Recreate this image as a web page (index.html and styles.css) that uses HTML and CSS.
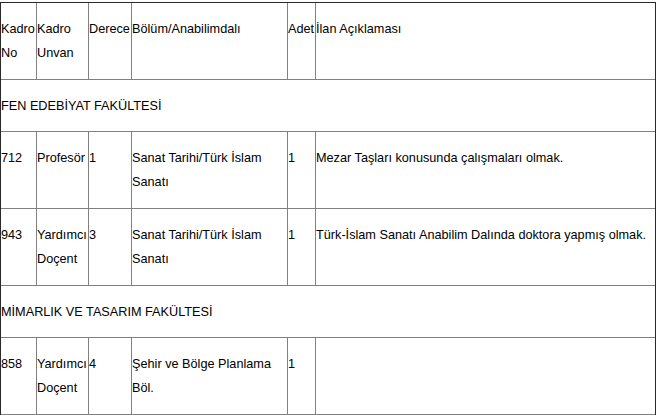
FILE: index.html
```html
<!DOCTYPE html>
<html lang="tr">
<head>
<meta charset="utf-8">
<title>Kadro İlanları</title>
<link rel="stylesheet" href="styles.css">
</head>
<body>
<table class="ilan">
  <tbody>
    <tr class="row">
      <td class="cell c1">Kadro No</td>
      <td class="cell c2">Kadro Unvan</td>
      <td class="cell c3">Derece</td>
      <td class="cell c4">Bölüm/Anabilimdalı</td>
      <td class="cell c5">Adet</td>
      <td class="cell c6">İlan Açıklaması</td>
    </tr>
    <tr class="section">
      <td class="cell c6" colspan="6">FEN EDEBİYAT FAKÜLTESİ</td>
    </tr>
    <tr class="row">
      <td class="cell">712</td>
      <td class="cell">Profesör</td>
      <td class="cell">1</td>
      <td class="cell">Sanat Tarihi/Türk İslam Sanatı</td>
      <td class="cell">1</td>
      <td class="cell c6">Mezar Taşları konusunda çalışmaları olmak.</td>
    </tr>
    <tr class="row">
      <td class="cell">943</td>
      <td class="cell">Yardımcı Doçent</td>
      <td class="cell">3</td>
      <td class="cell">Sanat Tarihi/Türk İslam Sanatı</td>
      <td class="cell">1</td>
      <td class="cell c6">Türk-İslam Sanatı Anabilim Dalında doktora yapmış olmak.</td>
    </tr>
    <tr class="section">
      <td class="cell c6" colspan="6">MİMARLIK VE TASARIM FAKÜLTESİ</td>
    </tr>
    <tr class="row">
      <td class="cell">858</td>
      <td class="cell">Yardımcı Doçent</td>
      <td class="cell">4</td>
      <td class="cell">Şehir ve Bölge Planlama Böl.</td>
      <td class="cell">1</td>
      <td class="cell c6"></td>
    </tr>
  </tbody>
</table>
</body>
</html>
```

FILE: styles.css
```css
html, body {
  margin: 0;
  padding: 0;
  background: #ffffff;
}

body {
  padding-top: 2px;
  font-family: "Liberation Sans", Arial, Helvetica, sans-serif;
  font-size: 12.7px;
  line-height: 24px;
  color: #000000;
}

.ilan {
  width: 656px;
  table-layout: fixed;
  border-collapse: separate;
  border-spacing: 0;
  border-top: 1px solid #2a2a2a;
  border-left: 1px solid #2a2a2a;
  border-right: 1px solid #2a2a2a;
}

.cell {
  box-sizing: border-box;
  vertical-align: top;
  text-align: left;
  padding: 14px 0 14px 0;
  border-right: 1px solid #808080;
  border-bottom: 1px solid #808080;
}

.section .cell {
  padding: 14px 0 13px 0;
}

.c1 { width: 36px; }
.c2 { width: 52px; }
.c3 { width: 43px; }
.c4 { width: 156px; }
.c5 { width: 28px; }
.c6 { border-right: none; }
.row .c6 { width: 339px; }
```
